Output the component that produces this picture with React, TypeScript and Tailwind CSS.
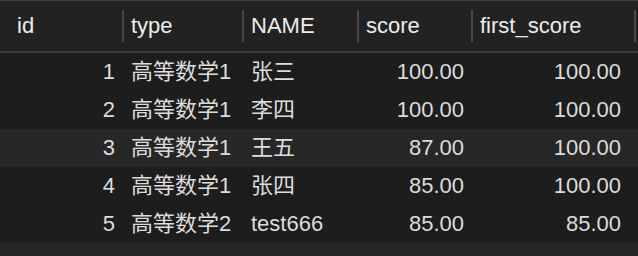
const rows = [
  { id: 1, type: "高等数学1", name: "张三", score: "100.00", first: "100.00" },
  { id: 2, type: "高等数学1", name: "李四", score: "100.00", first: "100.00" },
  { id: 3, type: "高等数学1", name: "王五", score: "87.00", first: "100.00" },
  { id: 4, type: "高等数学1", name: "张四", score: "85.00", first: "100.00" },
  { id: 5, type: "高等数学2", name: "test666", score: "85.00", first: "85.00" },
];

export default function App() {
  return (
    <div
      className="w-[638px] h-[256px] overflow-hidden bg-[#252525] text-[22px] leading-none"
      style={{ fontFamily: '"Liberation Sans", "Noto Sans CJK SC", sans-serif' }}
    >
      {/* header */}
      <div className="h-[51px] border-t border-[#3b3b3b] bg-[#222222] flex items-center text-[#ececec]">
        <div className="w-[122px] pl-[17px]">id</div>
        <div className="w-[120px] h-[32px] flex items-center border-l-2 border-[#474747] pl-[7px]">type</div>
        <div className="w-[115px] h-[32px] flex items-center border-l-2 border-[#474747] pl-[7px]">NAME</div>
        <div className="w-[114px] h-[32px] flex items-center border-l-2 border-[#474747] pl-[7px]">score</div>
        <div className="w-[163px] h-[32px] flex items-center border-l-2 border-[#474747] pl-[7px]">first_score</div>
        <div className="w-[2px] h-[32px] bg-[#474747]" />
      </div>
      <div className="h-[2px] bg-[#3a3a3a]" />

      {/* rows */}
      <div className="text-[#dcdcdc]">
        {rows.map((r, i) => (
          <div
            key={r.id}
            className={`h-[38px] flex items-center ${i === 2 ? "bg-[#272727]" : "bg-[#1d1d1d]"}`}
          >
            <div className="w-[122px] pr-[7px] text-right">{r.id}</div>
            <div className="w-[120px] pl-[9px]">{r.type}</div>
            <div className="w-[115px] pl-[9px]">{r.name}</div>
            <div className="w-[114px] pr-[7px] text-right">{r.score}</div>
            <div className="w-[163px] pr-[13px] text-right">{r.first}</div>
          </div>
        ))}
      </div>
    </div>
  );
}
